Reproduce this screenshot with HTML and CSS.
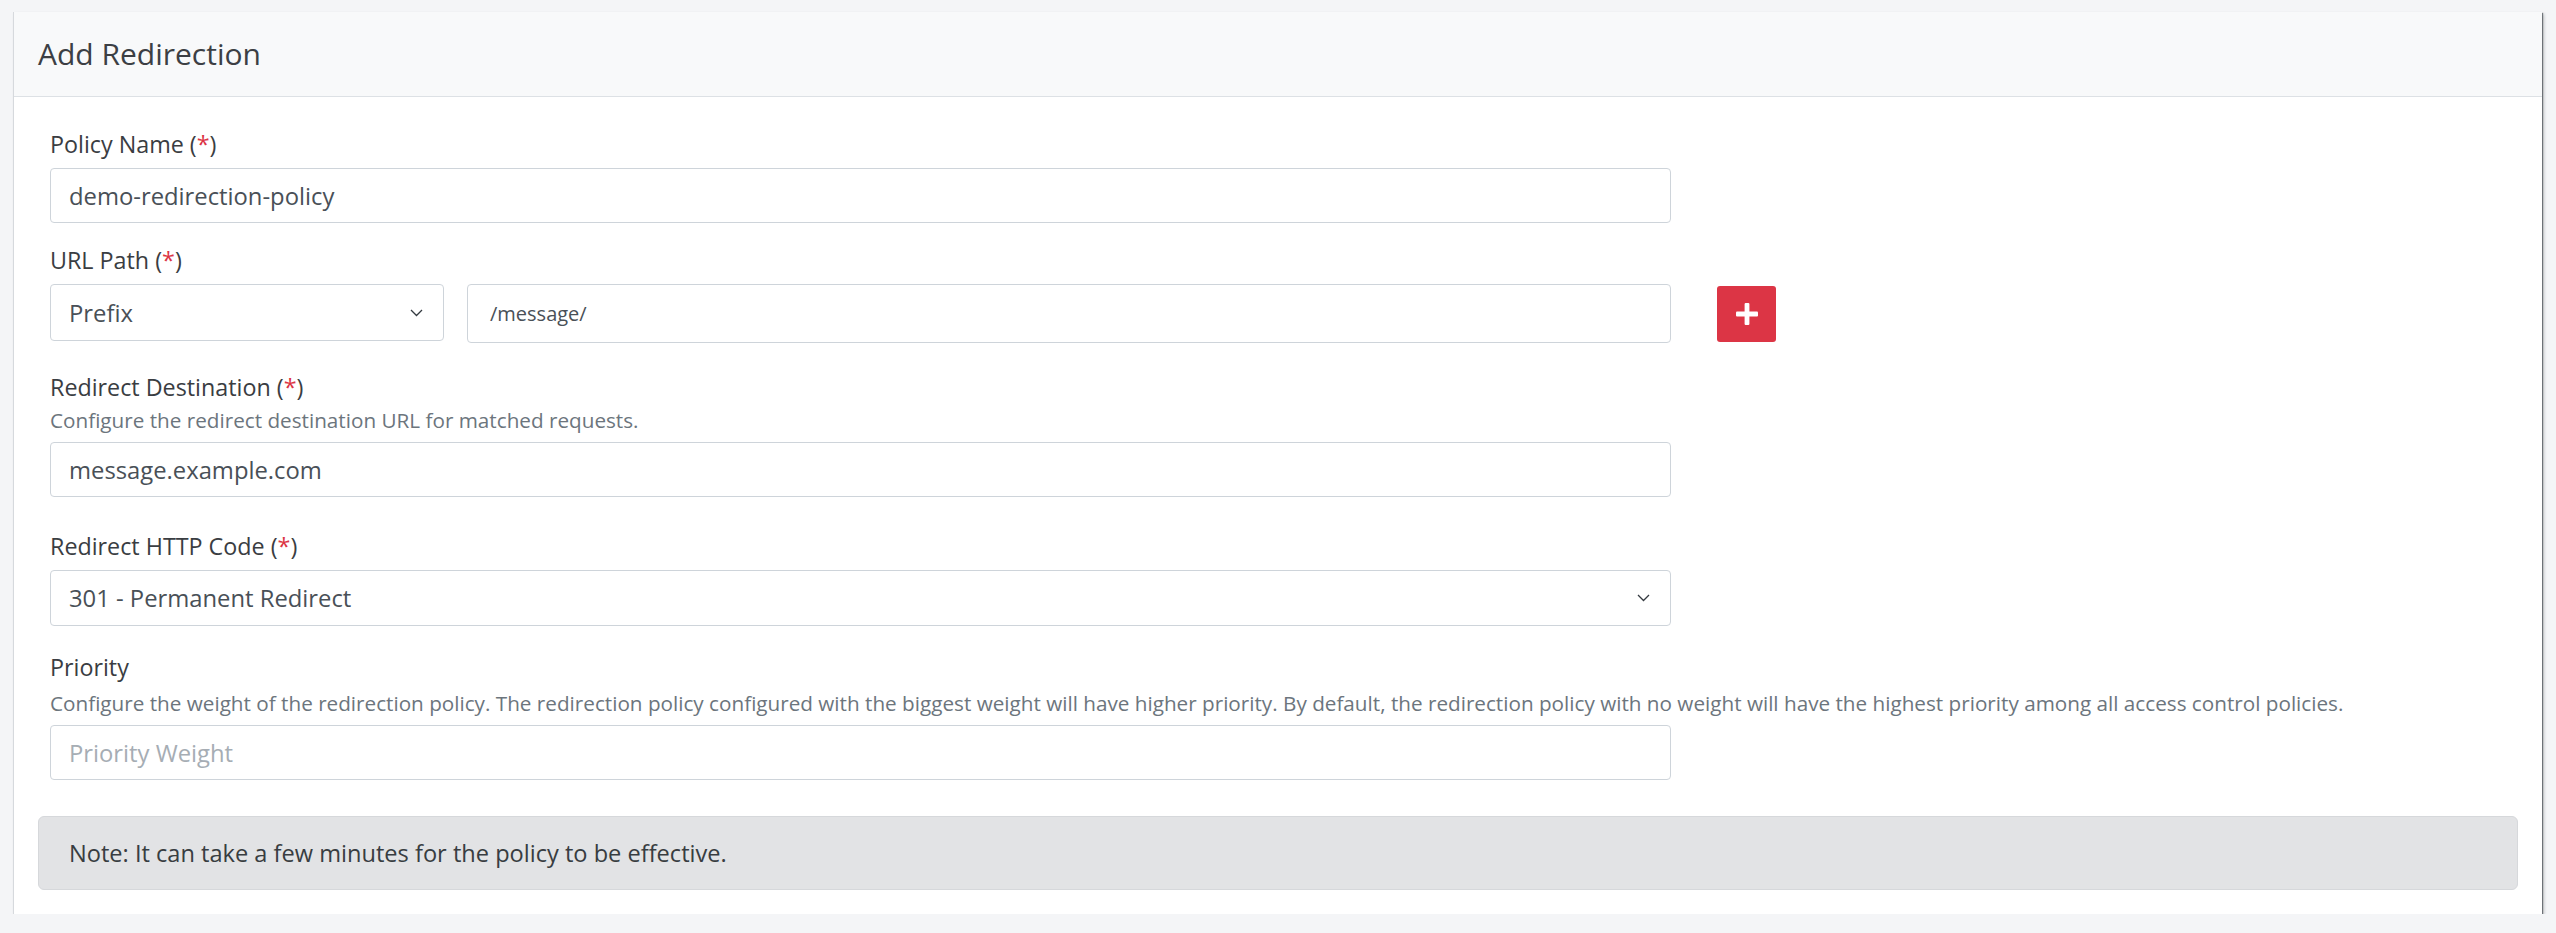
FILE: index.html
```html
<!DOCTYPE html>
<html lang="en">
<head>
    <meta charset="UTF-8">
    <meta name="viewport" content="width=device-width, initial-scale=1.0">
    <title>Add Redirection</title>
    <link rel="stylesheet" href="styles.css">
</head>
<body>
    <div class="card">
        <div class="card-header">Add Redirection</div>
        <div class="card-body">
            <form class="redirect-form">
                <label class="field-label">Policy Name (<span class="req">*</span>)</label>
                <div class="input wide">demo-redirection-policy</div>

                <label class="field-label url-label">URL Path (<span class="req">*</span>)</label>
                <div class="path-row">
                    <div class="select path-type">
                        <span>Prefix</span>
                        <svg class="chevron" width="13" height="8" viewBox="0 0 13 8"><path d="M1 1 L6.5 6.5 L12 1" fill="none" stroke="#343a40" stroke-width="1.3"/></svg>
                    </div>
                    <div class="input path-value">/message/</div>
                    <button type="button" class="btn-add">
                        <svg width="22" height="22" viewBox="0 0 22 22"><rect x="8.6" y="0" width="4.8" height="22" rx="1" fill="#fff"/><rect x="0" y="8.6" width="22" height="4.8" rx="1" fill="#fff"/></svg>
                    </button>
                </div>

                <label class="field-label dest-label">Redirect Destination (<span class="req">*</span>)</label>
                <p class="help">Configure the redirect destination URL for matched requests.</p>
                <div class="input wide after-help">message.example.com</div>

                <label class="field-label code-label">Redirect HTTP Code (<span class="req">*</span>)</label>
                <div class="select wide code-select">
                    <span>301 - Permanent Redirect</span>
                    <svg class="chevron" width="13" height="8" viewBox="0 0 13 8"><path d="M1 1 L6.5 6.5 L12 1" fill="none" stroke="#343a40" stroke-width="1.3"/></svg>
                </div>

                <label class="field-label prio-label">Priority</label>
                <p class="help help-prio">Configure the weight of the redirection policy. The redirection policy configured with the biggest weight will have higher priority. By default, the redirection policy with no weight will have the highest priority among all access control policies.</p>
                <div class="input wide after-help placeholder">Priority Weight</div>
            </form>

            <div class="note">Note: It can take a few minutes for the policy to be effective.</div>
        </div>
    </div>
</body>
</html>
```

FILE: styles.css
```css
body {
    margin: 0;
    background-color: #f4f5f7;
    font-family: "Open Sans", "Noto Sans", sans-serif;
    color: #3c3f44;
}
.card {
    margin: 12px 14px 0 13px;
    background-color: #fff;
    border-left: 1px solid #d6d9dd;
    box-shadow: 1px 1px 1px rgba(70, 76, 82, 0.7), 2px 2px 3px rgba(70, 76, 82, 0.3);
}
.card-header {
    height: 84px;
    line-height: 84px;
    padding: 0 24px;
    background-color: #f8f9fa;
    border-bottom: 1px solid #dde1e5;
    font-size: 30px;
    color: #3c3f44;
}
.card-body {
    padding: 33px 24px 24px;
}
.redirect-form {
    padding-left: 12px;
}
.field-label {
    display: block;
    font-size: 23.3px;
    line-height: 28px;
    margin-bottom: 10px;
    color: #3a3d42;
}
.req {
    color: #dc3545;
}
.url-label {
    margin-top: 23px;
}
.dest-label {
    margin-top: 30px;
    margin-bottom: 0;
}
.code-label {
    margin-top: 35px;
}
.prio-label {
    margin-top: 27px;
    margin-bottom: 0;
}
.help {
    margin: 7px 0 0;
    font-size: 20.7px;
    line-height: 24px;
    color: #6c757d;
    white-space: nowrap;
}
.help-prio {
    margin-top: 10px;
}
.after-help {
    margin-top: 10px;
}
.input, .select {
    box-sizing: border-box;
    height: 55px;
    display: flex;
    align-items: center;
    padding: 0 18px;
    border: 1px solid #ced4da;
    border-radius: 4px;
    background-color: #fff;
    font-size: 23.8px;
    color: #495057;
}
.wide {
    width: 1621px;
}
.placeholder {
    color: #a6adb4;
}
.select {
    justify-content: space-between;
    padding-right: 20px;
}
.code-select {
    height: 56px;
}
.path-row {
    display: flex;
    align-items: flex-start;
}
.path-type {
    width: 394px;
    height: 57px;
}
.path-value {
    width: 1204px;
    height: 59px;
    margin-left: 23px;
    padding-left: 22px;
    font-size: 20px;
}
.btn-add {
    width: 59px;
    height: 56px;
    margin: 2px 0 0 46px;
    padding: 0;
    border: none;
    border-radius: 3px;
    background-color: #dc3545;
    display: flex;
    align-items: center;
    justify-content: center;
    cursor: pointer;
}
.note {
    box-sizing: border-box;
    height: 74px;
    margin-top: 36px;
    padding: 0 30px;
    display: flex;
    align-items: center;
    background-color: #e2e3e5;
    border: 1px solid #d6d8db;
    border-radius: 6px;
    font-size: 23.6px;
    color: #383d41;
}
```
